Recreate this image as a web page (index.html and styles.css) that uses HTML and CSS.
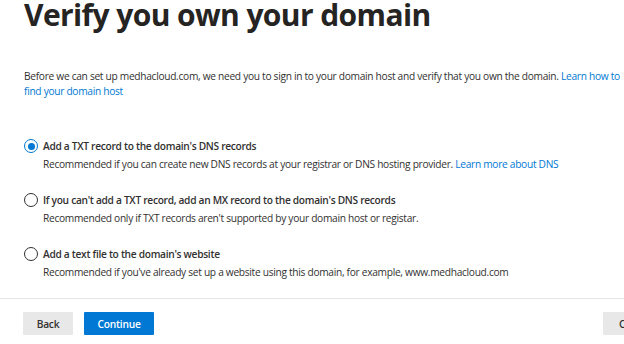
FILE: index.html
```html
<!DOCTYPE html>
<html>
<head>
<meta charset="utf-8">
<link rel="stylesheet" href="styles.css">
</head>
<body>
<div class="page">
  <div class="content">
    <h1 class="title">Verify you own your domain</h1>
    <p class="intro">Before we can set up medhacloud.com, we need you to sign in to your domain host and verify that you own the domain. <a class="link" href="#">Learn how to find your domain host</a></p>
    <div class="options">
      <label class="option">
        <span class="radio checked"></span>
        <span class="option-text">
          <span class="option-title">Add a TXT record to the domain's DNS records</span>
          <span class="option-desc">Recommended if you can create new DNS records at your registrar or DNS hosting provider. <a class="link" href="#">Learn more about DNS</a></span>
        </span>
      </label>
      <label class="option">
        <span class="radio"></span>
        <span class="option-text">
          <span class="option-title">If you can't add a TXT record, add an MX record to the domain's DNS records</span>
          <span class="option-desc">Recommended only if TXT records aren't supported by your domain host or registar.</span>
        </span>
      </label>
      <label class="option">
        <span class="radio"></span>
        <span class="option-text">
          <span class="option-title">Add a text file to the domain's website</span>
          <span class="option-desc">Recommended if you've already set up a website using this domain, for example, www.medhacloud.com</span>
        </span>
      </label>
    </div>
  </div>
  <div class="footer">
    <div class="footer-left">
      <button class="btn btn-default">Back</button>
      <button class="btn btn-primary">Continue</button>
    </div>
    <button class="btn btn-default btn-cancel">Cancel</button>
  </div>
</div>
</body>
</html>
```

FILE: styles.css
```css
html, body {
  margin: 0;
  padding: 0;
  background: #ffffff;
  overflow: hidden;
}
body {
  width: 624px;
  height: 344px;
  font-family: "Open Sans", "Noto Sans", sans-serif;
  color: #323130;
}
.page {
  display: flex;
  flex-direction: column;
}
.content {
  padding: 0 0 0 24px;
}
.title {
  margin: 0;
  font-size: 30px;
  line-height: 28px;
  padding-top: 1px;
  font-weight: 700;
  color: #252423;
  letter-spacing: -0.6px;
}
.intro {
  margin: 40px 0 0 0;
  font-size: 10.2px;
  line-height: 15px;
  letter-spacing: -0.3px;
}
.link {
  color: #0078d4;
  text-decoration: none;
}
.options {
  display: flex;
  flex-direction: column;
  gap: 20px;
  margin-top: 39px;
}
.option {
  display: flex;
  align-items: flex-start;
  gap: 5px;
}
.radio {
  width: 14px;
  height: 14px;
  border: 1px solid #323130;
  border-radius: 50%;
  flex: none;
  box-sizing: border-box;
  position: relative;
  margin-top: 1px;
}
.radio.checked {
  border-color: #0078d4;
}
.radio.checked::after {
  content: "";
  position: absolute;
  left: 2.5px;
  top: 2.5px;
  width: 7px;
  height: 7px;
  border-radius: 50%;
  background: #0078d4;
}
.option-text {
  display: flex;
  flex-direction: column;
  gap: 2px;
}
.option-title {
  font-size: 10.2px;
  line-height: 16px;
  font-weight: 600;
  letter-spacing: -0.3px;
  color: #323130;
}
.option-desc {
  font-size: 10.2px;
  line-height: 16px;
  letter-spacing: -0.3px;
  color: #323130;
}
.footer {
  margin-top: 18px;
  border-top: 1px solid #e6e6e6;
  display: flex;
  justify-content: space-between;
  padding: 13px 0 0 23px;
}
.footer-left {
  display: flex;
  gap: 11px;
}
.btn {
  height: 23px;
  border: none;
  font-family: "Open Sans", sans-serif;
  font-size: 10.2px;
  font-weight: 600;
  letter-spacing: -0.2px;
  padding: 0;
  border-radius: 1px;
}
.btn-default {
  background: #e8e8e8;
  color: #323130;
  width: 50px;
}
.btn-primary {
  background: #0078d4;
  color: #ffffff;
  width: 70px;
}
.btn-cancel {
  width: 70px;
  margin-right: -49px;
  text-align: left;
  padding-left: 16px;
}
```
